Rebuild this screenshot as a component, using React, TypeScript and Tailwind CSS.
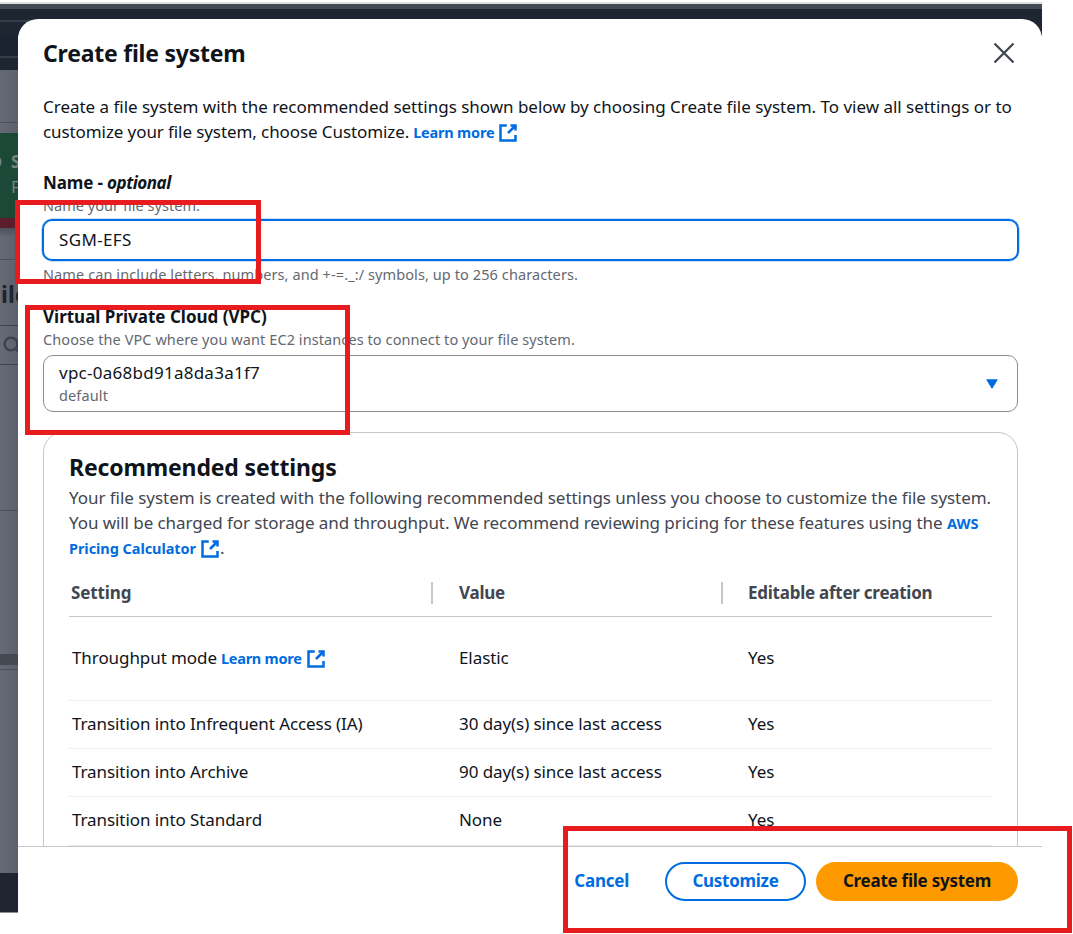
import type { ReactNode } from "react";

function ExternalIcon({ className = "" }: { className?: string }) {
  return (
    <svg viewBox="0 0 16 16" fill="none" stroke="currentColor" strokeWidth="2" className={`inline-block size-5 ${className}`}>
      <path d="M10 2h4v4" />
      <path d="m8 8 6-6" />
      <path d="M14 9.5V14H2V2h5" />
    </svg>
  );
}

function Link({ children, className = "" }: { children: ReactNode; className?: string }) {
  return <a className={`text-[14.5px] font-bold text-[#006ce0] ${className}`}>{children}</a>;
}

const rows = [
  { setting: "Transition into Infrequent Access (IA)", value: "30 day(s) since last access" },
  { setting: "Transition into Archive", value: "90 day(s) since last access" },
  { setting: "Transition into Standard", value: "None" },
];

function Backdrop() {
  return (
    <div className="absolute top-0 left-0 flex h-[934px] w-[1042px] flex-col overflow-hidden">
      <div className="h-[2px] shrink-0 bg-white" />
      <div className="h-[2px] shrink-0 bg-[#dfe0dc]" />
      <div className="h-[5px] shrink-0 bg-[#424a56]" />
      <div className="h-[27px] shrink-0 bg-[#1e2632]">
        <div className="mt-[11px] h-[2px] w-[30px] bg-[#353d4b]" />
      </div>
      <div className="flex w-[18px] grow flex-col overflow-hidden bg-linear-to-r from-[#666a74] to-[#5c606b]">
        <div className="h-[20px] shrink-0 bg-[#1c2330]" />
        <div className="h-[2px] shrink-0 bg-[#353d4b]" />
        <div className="h-[12px] shrink-0 bg-[#1e2632]" />
        <div className="h-[52px] shrink-0" />
        <div className="h-px shrink-0 bg-[#4c505c]" />
        <div className="h-[10px] shrink-0" />
        <div className="h-[85px] shrink-0 bg-[#1b4837] pt-[16px] text-[17px] leading-[25px] text-[#76877f]">
          <div className="flex">
            <svg viewBox="0 0 11 25" className="h-[25px] w-[11px] shrink-0" fill="none" stroke="currentColor" strokeWidth="2">
              <circle cx="-6" cy="13" r="6.5" />
            </svg>
            <span className="font-bold">S</span>
          </div>
          <div className="pl-[11px]">F</div>
        </div>
        <div className="h-[10px] shrink-0 bg-[#5b1d2b]" />
        <div className="h-[31px] shrink-0 bg-linear-to-b from-[#4d515b] to-transparent to-30%" />
        <div className="h-px shrink-0 bg-[#4a4e59]" />
        <div className="h-[65px] shrink-0 pt-[17px] pl-px text-[23px] leading-[34px] font-bold text-[#1f242e]">ile</div>
        <div className="h-px shrink-0 bg-[#3d424e]" />
        <div className="h-[38px] shrink-0 pt-[10px] pl-[3px]">
          <svg viewBox="0 0 18 18" className="size-[18px]" fill="none" stroke="#3c414d" strokeWidth="2.4">
            <circle cx="8" cy="8" r="6.4" />
            <path d="m12.5 12.5 5 5" />
          </svg>
        </div>
        <div className="h-px shrink-0 bg-[#3d424e]" />
        <div className="h-[145px] shrink-0" />
        <div className="h-px shrink-0 bg-[#4a4e59]" />
        <div className="h-[143px] shrink-0" />
        <div className="h-[11px] shrink-0 bg-[#444850]" />
        <div className="h-[4px] shrink-0" />
        <div className="h-px shrink-0 bg-[#4a4e59]" />
        <div className="h-[203px] shrink-0" />
        <div className="h-[39px] shrink-0 bg-[#1e2530]" />
        <div className="h-px shrink-0 bg-[#8b8f95]" />
        <div className="grow bg-white" />
      </div>
    </div>
  );
}

export default function App() {
  return (
    <div className="relative h-[934px] w-[1073px] overflow-hidden bg-white pt-[19px] pl-[18px] font-['Noto_Sans',sans-serif] text-[17px] leading-[25px] whitespace-nowrap text-[#0f141a]">
      <Backdrop />
      <main className="relative flex h-[915px] w-[1024px] flex-col rounded-t-[20px] bg-white">
        <div className="h-[827px] overflow-hidden pr-[24px] pl-[25px]">
          <header className="flex h-[75px] items-start justify-between pt-[19px]">
            <h1 className="text-[23px] leading-[30px] font-bold tracking-[-0.22px]">Create file system</h1>
            <svg viewBox="0 0 22 22" className="mt-[4px] mr-[3.5px] size-[22px]" fill="none" stroke="#424650" strokeWidth="2.3">
              <path d="m1.5 1.5 19 19m0-19-19 19" />
            </svg>
          </header>
          <p className="h-[25px] tracking-[-0.02px]">
            Create a file system with the recommended settings shown below by choosing Create file system. To view all settings or to
          </p>
          <p className="flex h-[25px] items-start">
            <span className="tracking-[-0.09px]">customize your file system, choose Customize.</span>
            <span className="ml-[4px] flex items-start tracking-[-0.2px]">
              <Link className="pt-px">Learn more</Link>
              <ExternalIcon className="mt-[4px] ml-[4px] text-[#006ce0]" />
            </span>
          </p>

          <label className="mt-[26px] block h-[25px] font-bold tracking-[-0.15px]">
            Name - <i className="tracking-[-0.45px]">optional</i>
          </label>
          <p className="h-[24px] text-[14.5px] leading-[20px] tracking-[0.04px] text-[#656871]">Name your file system.</p>
          <div className="-mx-px h-[42px] rounded-[10px] border-2 border-[#006ce0] px-[15px] pt-[6px] tracking-[0.35px] shadow-[0_0_0_0.5px_#8cbcf0]">SGM-EFS</div>
          <p className="mt-[3px] h-[40px] text-[14.5px] leading-[20px] tracking-[0.097px] text-[#656871]">
            Name can include letters, numbers, and +-=._:/ symbols, up to 256 characters.
          </p>

          <label className="block h-[25px] font-bold">Virtual Private Cloud (VPC)</label>
          <p className="h-[26px] text-[14.5px] leading-[20px] tracking-[0.085px] text-[#656871]">
            Choose the VPC where you want EC2 instances to connect to your file system.
          </p>
          <div className="flex h-[57px] items-center justify-between rounded-[10px] border border-[#8c8c94] pr-[19px] pl-[15px]">
            <div>
              <div className="-mt-[3px] tracking-[0.257px]">vpc-0a68bd91a8da3a1f7</div>
              <div className="text-[14.5px] leading-[20px] tracking-[0.12px] text-[#656871]">default</div>
            </div>
            <svg viewBox="0 0 12 10" className="h-[10px] w-[12px]" fill="#006ce0" stroke="#006ce0" strokeLinejoin="round">
              <path d="M.8.8h10.4L6 9.2Z" />
            </svg>
          </div>

          <section className="mt-[20px] h-[440px] rounded-[20px] border border-[#c6c6cd] px-[25px] pt-[19px]">
            <h2 className="text-[23px] leading-[30px] font-bold tracking-[-0.15px]">Recommended settings</h2>
            <div className="mt-[3px] text-[#424650]">
              <p className="h-[25px] tracking-[-0.04px]">
                Your file system is created with the following recommended settings unless you choose to customize the file system.
              </p>
              <p className="h-[25px]">
                <span className="tracking-[-0.073px]">
                  You will be charged for storage and throughput. We recommend reviewing pricing for these features using the{" "}
                </span>
                <Link>AWS</Link>
              </p>
              <p className="flex h-[25px] items-start tracking-[-0.06px]">
                <Link className="pt-px">Pricing Calculator</Link>
                <ExternalIcon className="mt-[4px] ml-[4px] text-[#006ce0]" />.
              </p>
            </div>
            <div className="mt-[12px] grid h-[45px] w-[923px] grid-cols-[364px_290px_269px] items-center border-b border-[#c6c6cd] pb-[3px] font-bold text-[#424650]">
              <div className="flex h-[22px] items-center border-r-2 border-[#c6c6cd] pl-[2px] tracking-[-0.1px]">Setting</div>
              <div className="flex h-[22px] items-center border-r-2 border-[#c6c6cd] pl-[26px] tracking-[-0.25px]">Value</div>
              <div className="pl-[25px] tracking-[-0.25px]">Editable after creation</div>
            </div>
            <div className="grid h-[84px] w-[923px] grid-cols-[364px_290px_269px] items-center border-b border-[#ebebf0] pb-[2px] tracking-[-0.08px]">
              <div className="flex h-[25px] items-start pl-[3px]">
                <span>Throughput mode</span>
                <span className="ml-[4px] flex items-start tracking-[-0.25px]">
                  <Link className="pt-px">Learn more</Link>
                  <ExternalIcon className="mt-[4px] ml-[4px] text-[#006ce0]" />
                </span>
              </div>
              <div className="pl-[26px]">Elastic</div>
              <div className="pl-[25px]">Yes</div>
            </div>
            {rows.map((row) => (
              <div
                key={row.setting}
                className="grid h-[48px] w-[923px] grid-cols-[364px_290px_269px] items-center border-b border-[#ebebf0] pb-[2px] tracking-[-0.08px] last:h-[49px] last:pb-[3px]"
              >
                <div className="pl-[3px]">{row.setting}</div>
                <div className="pl-[26px]">{row.value}</div>
                <div className="pl-[25px]">Yes</div>
              </div>
            ))}
          </section>
        </div>
        <footer className="flex h-[88px] items-start justify-end border-t border-[#c6c6cd] pt-[15px] pr-[24px] font-bold">
          <button className="mr-[36px] h-[39px] pb-[2px] tracking-[-0.25px] text-[#006ce0]">Cancel</button>
          <button className="mr-[10px] h-[39px] w-[141px] rounded-full border-2 border-[#006ce0] pb-[2px] tracking-[-0.3px] text-[#006ce0]">Customize</button>
          <button className="h-[39px] w-[202px] rounded-full bg-[#ff9900] pb-[2px] tracking-[-0.25px]">Create file system</button>
        </footer>
      </main>

      <div className="absolute top-[199.5px] left-[15px] h-[84px] w-[246px] border-5 border-[#e81c1e]" />
      <div className="absolute top-[305px] left-[25px] h-[130px] w-[325px] border-5 border-[#e81c1e]" />
      <div className="absolute top-[826px] left-[563px] h-[107px] w-[509px] border-5 border-[#e81c1e]" />
    </div>
  );
}
